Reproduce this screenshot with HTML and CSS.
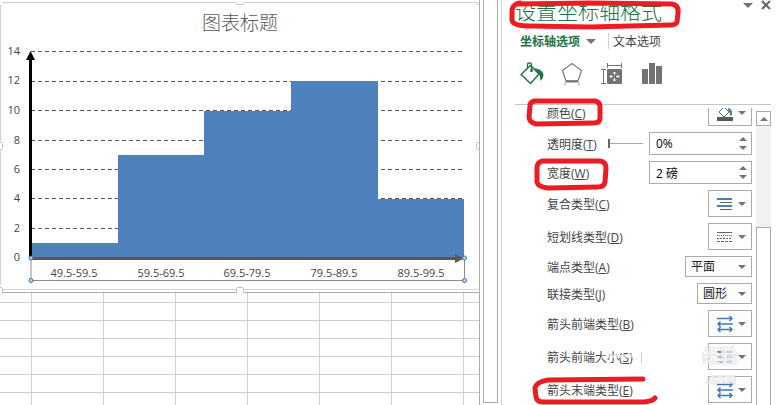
FILE: index.html
```
<!DOCTYPE html>
<html lang="zh-CN">
<head>
  <meta charset="UTF-8" />
  <meta name="viewport" content="width=device-width, initial-scale=1.0"/>
  <title>设置坐标轴格式</title>
  <link rel="stylesheet" href="styles.css">
</head>
<body>

  <main class="sheet">
    <svg class="chart" viewBox="0 0 479 293" role="img" aria-label="图表标题">
      <!-- frame -->
      <path class="frame" d="M0.5 5V141M0.5 151V285M3 4.500V2.500H236.500V4.500H243.500V2.500H477.500V4.500H479M3 289.500H236M244 289.500H477V287.500"/>
      <path class="frame-dark" d="M3 292.500H236M244 292.500H479"/>
      <rect class="handle" x="236.500" y="287.500" width="7" height="7" rx="1"/>
      <rect class="handle" x="-4.500" y="287.500" width="7" height="7" rx="1"/>
      <rect class="handle" x="-4.500" y="142.500" width="7" height="7" rx="1"/>
      <rect class="handle" x="476.500" y="142.500" width="7" height="7" rx="1"/>

      <text class="chart-title" x="240" y="30">图表标题</text>

      <path class="gridline" d="M31 51.500H463M31 81.500H463M31 110.500H463M31 140.500H463M31 169.500H463M31 198.500H463M31 228.500H463"/>
      <path class="bars" d="M31 258V243H118V155H204V111H291V81H378V199H464V258Z"/>

      <g class="value-labels">
        <text x="20" y="55">14</text>
        <text x="20" y="84">12</text>
        <text x="20" y="114">10</text>
        <text x="20" y="144">8</text>
        <text x="20" y="173">6</text>
        <text x="20" y="202">4</text>
        <text x="20" y="232">2</text>
        <text x="20" y="261">0</text>
      </g>
      <g class="category-labels">
        <text x="74" y="277">49.5-59.5</text>
        <text x="161" y="277">59.5-69.5</text>
        <text x="247" y="277">69.5-79.5</text>
        <text x="334" y="277">79.5-89.5</text>
        <text x="421" y="277">89.5-99.5</text>
      </g>

      <!-- axes -->
      <path class="y-axis" d="M29 258V60H26L30.500 51L35 60H32V258Z"/>
      <path class="x-axis" d="M31 257H455V254L464 258.500L455 263V260H31Z"/>
      <path class="selection" d="M31 258V280.500H464.500V258"/>
      <g class="dots">
        <circle cx="31" cy="258" r="2"/>
        <circle cx="464.500" cy="258" r="2"/>
        <circle cx="31" cy="280.500" r="2"/>
        <circle cx="464.500" cy="280.500" r="2"/>
      </g>
    </svg>
    <div class="cells"></div>
  </main>

  <div class="sheet-scroll"></div>

  <aside class="pane">
    <header class="pane-header">
      <h1>设置坐标轴格式</h1>
      <div class="pane-tools">
        <button class="plain" aria-label="任务窗格选项"><span class="caret"></span></button>
        <button class="plain" aria-label="关闭">
          <svg width="10" height="10" viewBox="0 0 10 10"><path d="M1 1L9 9M9 1L1 9" stroke="#666" stroke-width="2"/></svg>
        </button>
      </div>
    </header>

    <nav class="tabs">
      <button class="plain tab active">坐标轴选项 <span class="caret"></span></button>
      <button class="plain tab">文本选项</button>
    </nav>

    <div class="icon-tabs">
      <button class="plain" aria-label="填充与线条">
        <svg width="24" height="24" viewBox="0 0 24 24">
          <path d="M10.500 3.500L19 12L10.500 21.500L1 12.500Z" fill="none" stroke="#217346" stroke-width="1.500"/>
          <path d="M7.500 6V2.500Q7.500 1 9.500 1Q11.500 1 11.500 2.500V8" fill="none" stroke="#217346" stroke-width="1.300"/>
          <circle cx="11.500" cy="8.500" r="1.500" fill="#217346"/>
          <path d="M14 6Q21 7 23 11Q24.500 15 20.500 19Q20 13 18.500 11Z" fill="#217346"/>
        </svg>
      </button>
      <button class="plain" aria-label="效果">
        <svg width="24" height="24" viewBox="0 0 24 24">
          <path d="M12 1.500L21.500 8.500L18 19H6L2.500 8.500Z" fill="none" stroke="#808080" stroke-width="1.300"/>
          <path d="M6 19.500H18" stroke="#737373" stroke-width="2"/>
          <path d="M6 20L4.500 23.500M18 20L19.500 23.500" stroke="#bbb" stroke-width="1.500"/>
        </svg>
      </button>
      <button class="plain" aria-label="大小与属性">
        <svg width="24" height="24" viewBox="0 0 24 24">
          <path d="M7.500 1V6M21.500 1V6M7.500 3.500H21.500M1 7.500H6M1 21.500H6M3.500 7.500V21.500" fill="none" stroke="#737373"/>
          <rect x="7" y="7" width="15" height="15" rx="1" fill="#737373"/>
          <path d="M14.500 10V13M14.500 16V19M10 14.500H13M16 14.500H19M13 11.500L14.500 10L16 11.500M13 17.500L14.500 19L16 17.500M11.500 13L10 14.500L11.500 16M17.500 13L19 14.500L17.500 16" fill="none" stroke="#fff"/>
        </svg>
      </button>
      <button class="plain" aria-label="坐标轴选项">
        <svg width="24" height="24" viewBox="0 0 24 24">
          <path d="M2 7H8V22H2ZM9 1H15V22H9ZM16 4H22V22H16Z" fill="#737373"/>
        </svg>
      </button>
    </div>

    <div class="divider"></div>

    <div class="options">
      <div class="rows">
        <div class="row tall">
          <label for="color">颜色(<u>C</u>)</label>
          <button id="color" class="picker">
            <svg width="16" height="18" viewBox="0 0 16 18">
              <path d="M7 3L12 8L7 13L2 8Z" fill="#fff" stroke="#666"/>
              <path d="M11 4Q16 5 15 11L13 12Q13 8 11 6Z" fill="#4a7ebb"/>
              <path d="M0 13H16V17H0Z" fill="#595959"/>
            </svg>
            <span class="caret"></span>
          </button>
        </div>
        <div class="row">
          <label for="opacity">透明度(<u>T</u>)</label>
          <input type="range" class="slider" min="0" max="100" value="0" aria-label="透明度">
          <div class="spin">
            <input type="text" id="opacity" value="0%">
            <div class="steps"><button class="up" aria-label="增加"></button><button class="down" aria-label="减少"></button></div>
          </div>
        </div>
        <div class="row">
          <label for="width">宽度(<u>W</u>)</label>
          <div class="spin">
            <input type="text" id="width" value="2 磅">
            <div class="steps"><button class="up" aria-label="增加"></button><button class="down" aria-label="减少"></button></div>
          </div>
        </div>
        <div class="row tall">
          <label for="compound">复合类型(<u>C</u>)</label>
          <button id="compound" class="picker">
            <svg width="16" height="18" viewBox="0 0 16 18">
              <path d="M0 4H15M0 11H15" stroke="#4a7ebb" stroke-width="2"/>
              <path d="M3 7.500H15M3 14.500H15" stroke="#666"/>
            </svg>
            <span class="caret"></span>
          </button>
        </div>
        <div class="row tall">
          <label for="dash">短划线类型(<u>D</u>)</label>
          <button id="dash" class="picker">
            <svg width="16" height="18" viewBox="0 0 16 18" fill="none" stroke="#666">
              <path d="M0 4.500H15"/>
              <path d="M0 7.500H15" stroke-dasharray="1 1"/>
              <path d="M0 10.500H15" stroke-dasharray="2 1"/>
              <path d="M0 13.500H15" stroke-dasharray="3 1"/>
            </svg>
            <span class="caret"></span>
          </button>
        </div>
        <div class="row short">
          <label for="cap">端点类型(<u>A</u>)</label>
          <div class="select wide">
            <select id="cap"><option>平面</option><option>方形</option><option>圆形</option></select>
            <span class="caret"></span>
          </div>
        </div>
        <div class="row short">
          <label for="join">联接类型(<u>J</u>)</label>
          <div class="select">
            <select id="join"><option>圆形</option><option>棱台</option><option>斜接</option></select>
            <span class="caret"></span>
          </div>
        </div>
        <div class="row tall">
          <label for="beginType">箭头前端类型(<u>B</u>)</label>
          <button id="beginType" class="picker">
            <svg class="arrows" width="16" height="18" viewBox="0 0 16 18">
              <path d="M0 3.500H15M12.500 1L15 3.500L12.500 6M1 9H16M3.500 6.500L1 9L3.500 11.500M1 14.500H15M3.500 12L1 14.500L3.500 17M12.500 12L15 14.500L12.500 17"/>
            </svg>
            <span class="caret"></span>
          </button>
        </div>
        <div class="row tall">
          <label for="beginSize">箭头前端大小(<u>S</u>)</label>
          <button id="beginSize" class="picker">
            <svg width="16" height="18" viewBox="0 0 16 18" stroke="#4a7ebb" stroke-width="2">
              <path d="M0 4H6M9 4H15M0 9H6M9 9H15M0 14H6M9 14H15"/>
            </svg>
            <span class="caret"></span>
          </button>
        </div>
        <div class="row tall">
          <label for="endType">箭头末端类型(<u>E</u>)</label>
          <button id="endType" class="picker">
            <svg class="arrows" width="16" height="18" viewBox="0 0 16 18">
              <path d="M0 3.500H15M12.500 1L15 3.500L12.500 6M1 9H16M3.500 6.500L1 9L3.500 11.500M1 14.500H15M3.500 12L1 14.500L3.500 17M12.500 12L15 14.500L12.500 17"/>
            </svg>
            <span class="caret"></span>
          </button>
        </div>
      </div>
      <div class="scrollbar">
        <button class="scroll-up" aria-label="向上滚动"></button>
        <div class="thumb"></div>
      </div>
    </div>

    <!-- red marker strokes and watermark over the pane -->
    <svg class="marks" width="282" height="405" viewBox="501 0 282 405">
      <g class="watermark">
        <path d="M601 357L634 356" stroke="#fff" stroke-width="3" opacity="0.600"/>
        <path d="M641.500 352V363" stroke="#ccc"/>
        <text x="703" y="362" font-size="17">经验</text>
        <text x="706" y="383" font-size="13">.com</text>
      </g>
      <g class="marker">
        <path d="M517 4L590 3L672 4Q679 5 678 13L677 22Q676 25 670 25L590 27L530 26Q513 26 512 20L512 10Q513 4 520 3"/>
        <path d="M534 101L595 101Q600 102 600 107L600 118Q600 123 594 123L536 124Q529 122 529 117L530 106Q530 101 536 101"/>
        <path d="M543 161L600 161Q606 162 606 168L605 182Q604 187 598 187L548 188Q538 187 537 182L537 168Q537 162 543 161"/>
        <path d="M643 379L548 380Q536 382 535 388L536 397Q537 402 543 402L644 402Q653 401 655 398"/>
      </g>
    </svg>
  </aside>

</body>
</html>
```
FILE: styles.css
```
* {
  box-sizing: border-box;
}

body {
  margin: 0;
  display: flex;
  gap: 3px;
  height: 100vh;
  overflow: hidden;
  background-color: #fff;
  color: #444;
  font-family: "Open Sans", "Noto Sans CJK SC", sans-serif;
  font-size: 12px;
}

h1 {
  margin: 0;
}

/* worksheet */
.sheet {
  flex: 1;
  min-width: 0;
  display: flex;
  flex-direction: column;
  border-right: 1px solid #ababab;
}

.chart {
  display: block;
  width: 100%;
  flex: none;
}

.cells {
  flex: 1;
  background-image:
    linear-gradient(#d0d0d0 1px, transparent 1px),
    linear-gradient(90deg, #d0d0d0 1px, transparent 1px);
  background-size: 100% 18px, 72px 100%;
  background-position: 0 9px, 31px 0;
}

.frame {
  fill: none;
  stroke: #d0d0d0;
}

.frame-dark {
  stroke: #ababab;
}

.handle {
  fill: #fff;
  stroke: #c0c0c0;
}

.chart-title {
  font-size: 19px;
  font-weight: 300;
  fill: #595959;
  text-anchor: middle;
}

.gridline {
  stroke: #595959;
  stroke-dasharray: 4 3;
}

.bars {
  fill: #4f81bd;
}

.value-labels,
.category-labels {
  font-size: 11px;
  fill: #444;
}

.value-labels {
  text-anchor: end;
}

.category-labels {
  text-anchor: middle;
}

.y-axis {
  fill: #000;
}

.x-axis {
  fill: #595959;
}

.selection {
  fill: none;
  stroke: #8c8c8c;
}

.dots {
  fill: #b8d4ee;
  stroke: #41719c;
}

.sheet-scroll {
  width: 15px;
  margin-bottom: 2px;
  border: 1px solid #ababab;
  border-top: 0;
}

/* format pane */
.pane {
  position: relative;
  width: 282px;
  display: flex;
  flex-direction: column;
  padding: 0 12px 0 13px;
  border-left: 1px solid #d0d0d0;
}

.plain {
  display: flex;
  align-items: center;
  padding: 0;
  border: 0;
  background: none;
  color: inherit;
  font: inherit;
  cursor: pointer;
}

.caret {
  width: 0;
  border: 4px solid transparent;
  border-top-color: #737373;
  border-bottom: 0;
}

.pane-header {
  display: flex;
  justify-content: space-between;
  height: 24px;
}

.pane-header h1 {
  color: #217346;
  font-size: 21px;
  font-weight: 300;
  line-height: 22px;
}

.pane-tools {
  display: flex;
  gap: 8px;
  height: 10px;
}

.pane-tools .caret {
  border-width: 5px;
  border-bottom: 0;
}

.tabs {
  display: flex;
  align-items: center;
  height: 34px;
  padding-left: 5px;
}

.tab {
  height: 16px;
}

.tab + .tab {
  margin-left: 12px;
  padding-left: 4px;
  border-left: 1px solid #d0d0d0;
}

.tab.active {
  gap: 6px;
  color: #217346;
  font-weight: bold;
}

.tab .caret {
  border-width: 5px;
  border-bottom: 0;
}

.icon-tabs {
  display: flex;
  gap: 16px;
  padding: 4px 5px;
  height: 46px;
}

.icon-tabs .plain {
  height: 24px;
}

.divider {
  height: 4px;
  border-top: 1px solid #c6c6c6;
}

.options {
  flex: 1;
  min-height: 0;
  display: flex;
  gap: 4px;
  overflow: hidden;
}

/* the list is scrolled a little way down */
.rows {
  flex: 1;
  display: flex;
  flex-direction: column;
  gap: 6px;
  margin-top: -9px;
  padding-left: 32px;
}

.row {
  flex: none;
  display: flex;
  align-items: center;
  height: 23px;
}

.row.tall {
  height: 27px;
}

.row.short {
  height: 21px;
}

.row label {
  margin-right: auto;
  white-space: nowrap;
}

.picker {
  display: flex;
  align-items: center;
  justify-content: space-between;
  width: 44px;
  height: 100%;
  padding: 0 5px 0 8px;
  border: 1px solid #ababab;
  background-color: #fdfdfd;
}

.arrows {
  fill: none;
  stroke: #3d78b8;
  stroke-width: 1.5px;
}

.spin {
  display: flex;
  width: 103px;
  height: 100%;
  border: 1px solid #ababab;
}

.spin input {
  flex: 1;
  min-width: 0;
  padding: 0 6px;
  border: 0;
  color: #000;
  font: inherit;
}

.steps {
  display: flex;
  flex-direction: column;
  justify-content: center;
  gap: 5px;
  padding-right: 4px;
}

.steps button {
  width: 0;
  padding: 0;
  border: 4px solid transparent;
  background: none;
}

.steps .up {
  border-top: 0;
  border-bottom-color: #737373;
}

.steps .down {
  border-bottom: 0;
  border-top-color: #737373;
}

.slider {
  appearance: none;
  width: 35px;
  height: 9px;
  margin: 0 6px 0 0;
  background: linear-gradient(#ababab, #ababab) center / 100% 1px no-repeat;
}

.slider::-webkit-slider-thumb {
  appearance: none;
  width: 2px;
  height: 9px;
  background-color: #666;
}

.select {
  display: flex;
  align-items: center;
  width: 55px;
  height: 100%;
  padding: 0 5px;
  border: 1px solid #ababab;
  background-color: #fdfdfd;
}

.select.wide {
  width: 67px;
}

.select select {
  appearance: none;
  flex: 1;
  min-width: 0;
  padding: 0;
  border: 0;
  background: none;
  color: #222;
  font: inherit;
}

.scrollbar {
  display: flex;
  flex-direction: column;
  width: 15px;
  margin-top: 3px;
  background-color: #f1f1f1;
}

.scroll-up {
  display: flex;
  align-items: center;
  justify-content: center;
  height: 15px;
  padding: 0;
  border: 1px solid #ababab;
  background-color: #fff;
}

.scroll-up::before {
  content: "";
  border: 4px solid transparent;
  border-top: 0;
  border-bottom-color: #737373;
}

.thumb {
  flex: 1;
  margin-top: 101px;
  border: 1px solid #ababab;
  border-bottom: 0;
  background-color: #fff;
}

.marks {
  position: absolute;
  top: 0;
  left: -1px;
  pointer-events: none;
}

.marker {
  fill: none;
  stroke: #ed1c24;
  stroke-width: 5px;
  stroke-linecap: round;
  stroke-linejoin: round;
}

.watermark text {
  fill: #fff;
  stroke: #ddd;
  stroke-width: 2px;
  paint-order: stroke;
  opacity: 0.8;
}
```
